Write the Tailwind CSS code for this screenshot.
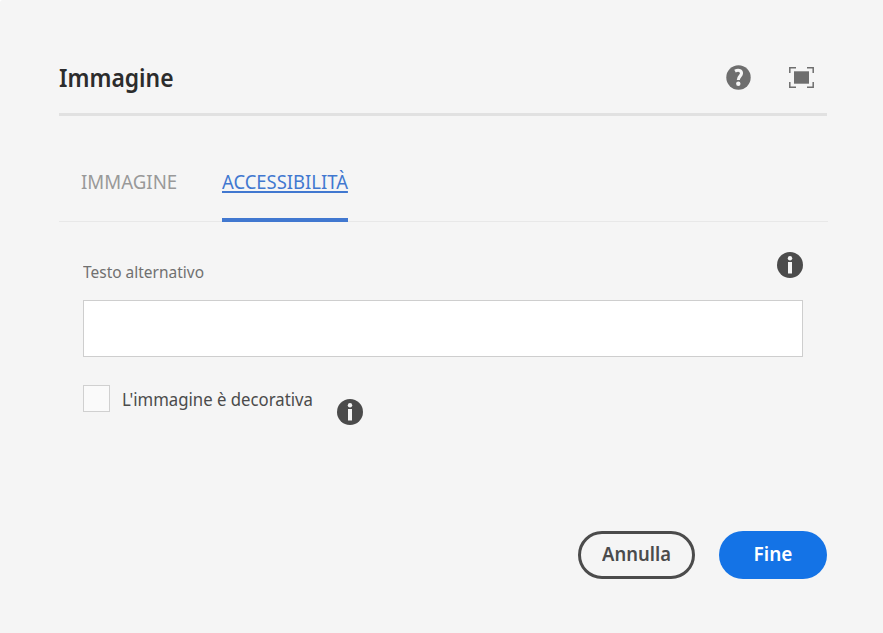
<!DOCTYPE html>
<html lang="it">
<head>
<meta charset="utf-8">
<title>Immagine</title>
<script src="https://cdn.jsdelivr.net/npm/@tailwindcss/browser@4"></script>
</head>
<body class="bg-white font-['Noto_Sans','Open_Sans',sans-serif]">
<main class="flex h-[633px] w-[883px] flex-col overflow-hidden rounded-tl-[3px] bg-[#f5f5f5] pl-[59px] pr-14">
  <header class="flex h-[116px] shrink-0 items-end justify-between border-b-[3px] border-[#e1e1e1] pb-[19px]">
    <h1 class="origin-left scale-x-[0.915] whitespace-nowrap text-[25px] font-semibold leading-[34px] text-[#2c2c2c]">Immagine</h1>
    <div class="flex items-center gap-[38px] pr-[13px] pb-1">
      <svg class="size-[25px]" viewBox="0 0 25 25" aria-label="Aiuto"><circle cx="12.5" cy="12.5" r="12.2" fill="#6e6e6e"/><path d="M9 6.200C12 4.600 15.500 5.200 15.500 8.300C15.500 11.100 12.300 11.300 12.300 15" fill="none" stroke="#f5f5f5" stroke-width="3.100"/><circle cx="12.300" cy="18.800" r="2.200" fill="#f5f5f5"/></svg>
      <svg class="h-[21px] w-[25px]" viewBox="0 0 25 21" aria-label="Schermo intero"><path d="M.8 6V.8H7M18 .8h6.2V6M24.200 15v5.200H18M7 20.200H.8V15" fill="none" stroke="#6e6e6e" stroke-width="1.500"/><path d="M5 4.300h15v12.400H5z" fill="#6e6e6e"/></svg>
    </div>
  </header>
  <nav class="-mr-px flex h-[106px] shrink-0 items-end gap-[45px] border-b border-[#e8e8e8] pl-[22px] text-[19.500px] leading-[28px]">
    <a class="mb-[-1px] h-[54px] w-[96px] whitespace-nowrap text-[#999]"><span class="inline-block origin-left scale-x-[0.957]">IMMAGINE</span></a>
    <a class="mb-[-1px] h-[54px] w-[126px] whitespace-nowrap border-b-4 border-[#4178d0] text-[#4178d0]"><span class="inline-block origin-left scale-x-[0.945] underline decoration-2 underline-offset-[2px]">ACCESSIBILITÀ</span></a>
  </nav>
  <section class="flex flex-col px-6">
    <div class="flex h-[78px] justify-between pt-[30px]">
      <label class="origin-left scale-x-[0.91] pt-[8px] whitespace-nowrap text-[17px] leading-[24px] text-[#707070]">Testo alternativo</label>
      <svg class="size-[26px]" viewBox="0 0 26 26"><circle cx="13" cy="13" r="13" fill="#4b4b4b"/><circle cx="13" cy="6.300" r="2.200" fill="#f5f5f5"/><path d="M11 10h4v11.500h-4z" fill="#f5f5f5"/></svg>
    </div>
    <div class="h-[57px] border border-[#cecece] bg-white"></div>
    <div class="mt-7 flex h-[42px] items-start">
      <div class="size-[27px] border border-[#d0d0d0] bg-[#fafafa]"></div>
      <div class="ml-3 w-[191px] whitespace-nowrap text-[18.500px] leading-[28px] text-[#4b4b4b]"><span class="inline-block origin-left scale-x-[0.905]">L'immagine è decorativa</span></div>
      <svg class="ml-6 mt-[14px] size-[26px]" viewBox="0 0 26 26"><circle cx="13" cy="13" r="13" fill="#4b4b4b"/><circle cx="13" cy="6.300" r="2.200" fill="#f5f5f5"/><path d="M11 10h4v11.500h-4z" fill="#f5f5f5"/></svg>
    </div>
  </section>
  <footer class="mt-auto mb-[54px] flex justify-end gap-6 text-[19px] font-semibold leading-[26px]">
    <button class="flex h-12 w-[117px] items-center justify-center whitespace-nowrap rounded-full border-[3px] border-[#4b4b4b] pb-[2px] text-[#4b4b4b]"><span class="scale-x-[0.97]">Annulla</span></button>
    <button class="flex h-12 w-[108px] items-center justify-center rounded-full bg-[#1473e6] pb-[2px] text-white">Fine</button>
  </footer>
</main>
</body>
</html>
